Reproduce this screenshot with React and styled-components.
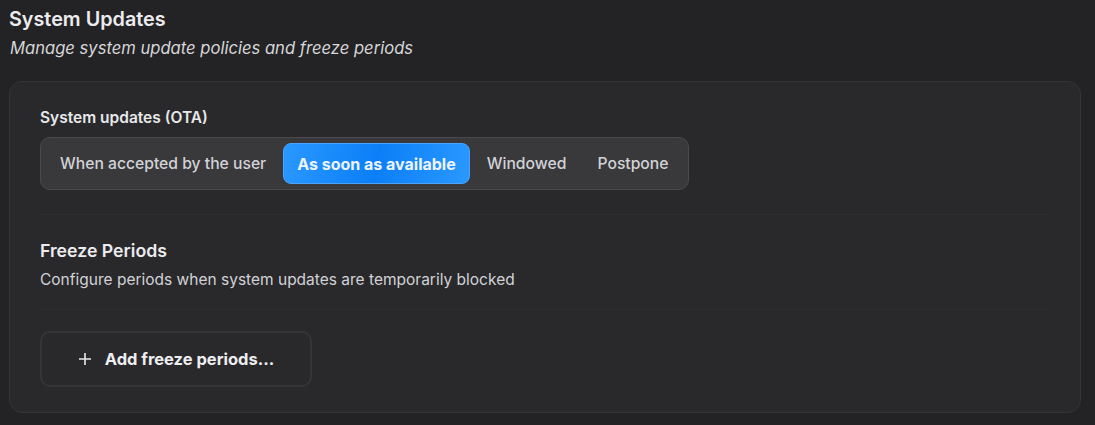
import React, { useState } from "react";
import styled, { createGlobalStyle } from "styled-components";

const GlobalStyle = createGlobalStyle`
  html, body {
    margin: 0;
    padding: 0;
    background: #232325;
  }
  body {
    font-family: Inter, "Noto Sans", "Liberation Sans", sans-serif;
    color: #e6e6e8;
    -webkit-font-smoothing: antialiased;
  }
`;

const Page = styled.div`
  width: 1095px;
  height: 425px;
  box-sizing: border-box;
  padding: 6px 14px 0 9px;
`;

const Title = styled.h2`
  margin: 0;
  font-size: 19.8px;
  line-height: 26px;
  font-weight: 600;
  color: #ececee;
`;

const Subtitle = styled.p`
  margin: 4px 0 0 1px;
  font-size: 16.6px;
  line-height: 24px;
  font-style: italic;
  color: #d6d6d8;
`;

const Card = styled.section`
  margin-top: 21px;
  box-sizing: border-box;
  height: 332px;
  padding: 26px 30px 0 30px;
  background: #29292c;
  border: 1px solid #343437;
  border-radius: 13px;
`;

const Label = styled.div`
  font-size: 15.5px;
  line-height: 20px;
  font-weight: 600;
  color: #e8e8ea;
`;

const Segmented = styled.div`
  margin-top: 9px;
  display: inline-flex;
  gap: 3px;
  padding: 5px;
  background: #39393c;
  border: 1px solid #4a4a4d;
  border-radius: 10px;
`;

const Segment = styled.button`
  height: 41px;
  padding: 0 13px;
  border: 1px solid ${(p) => (p.$active ? "#4aa3ff" : "transparent")};
  border-radius: 8px;
  background: ${(p) =>
    p.$active
      ? "linear-gradient(100deg, #2a98ff 0%, #0b7ff7 50%, #2a98ff 100%)"
      : "transparent"};
  color: ${(p) => (p.$active ? "#eef4ff" : "#d2d2d6")};
  font-family: inherit;
  font-size: ${(p) => (p.$active ? "16px" : "15.7px")};
  font-weight: ${(p) => (p.$active ? 700 : 500)};
  cursor: pointer;
  white-space: nowrap;
`;

const Divider = styled.hr`
  margin: ${(p) => p.$margin};
  border: none;
  border-top: 1px solid #2f2f32;
  width: 1010px;
`;

const SectionTitle = styled.h3`
  margin: 0;
  font-size: 17.7px;
  line-height: 24px;
  font-weight: 600;
  color: #ececee;
`;

const Description = styled.p`
  margin: 7px 0 0 0;
  font-size: 15.5px;
  line-height: 20px;
  color: #d2d2d6;
`;

const AddButton = styled.button`
  display: flex;
  align-items: center;
  justify-content: center;
  gap: 13px;
  width: 272px;
  height: 56px;
  padding: 0;
  background: transparent;
  border: 2px solid #353538;
  border-radius: 10px;
  color: #eeeef0;
  font-family: inherit;
  font-size: 16.5px;
  font-weight: 700;
  cursor: pointer;
`;

const options = [
  "When accepted by the user",
  "As soon as available",
  "Windowed",
  "Postpone",
];

const PlusIcon = () => (
  <svg width="14" height="14" viewBox="0 0 14 14" fill="none">
    <path d="M7 1v12M1 7h12" stroke="#e8e8ea" strokeWidth="1.6" />
  </svg>
);

export default function App() {
  const [policy, setPolicy] = useState("As soon as available");
  return (
    <Page>
      <GlobalStyle />
      <Title>System Updates</Title>
      <Subtitle>Manage system update policies and freeze periods</Subtitle>
      <Card>
        <Label>System updates (OTA)</Label>
        <Segmented>
          {options.map((o) => (
            <Segment key={o} $active={o === policy} onClick={() => setPolicy(o)}>
              {o}
            </Segment>
          ))}
        </Segmented>
        <Divider $margin="24px 0 24px 0" />
        <SectionTitle>Freeze Periods</SectionTitle>
        <Description>
          Configure periods when system updates are temporarily blocked
        </Description>
        <Divider $margin="19px 0 21px 0" />
        <AddButton>
          <PlusIcon />
          Add freeze periods...
        </AddButton>
      </Card>
    </Page>
  );
}
